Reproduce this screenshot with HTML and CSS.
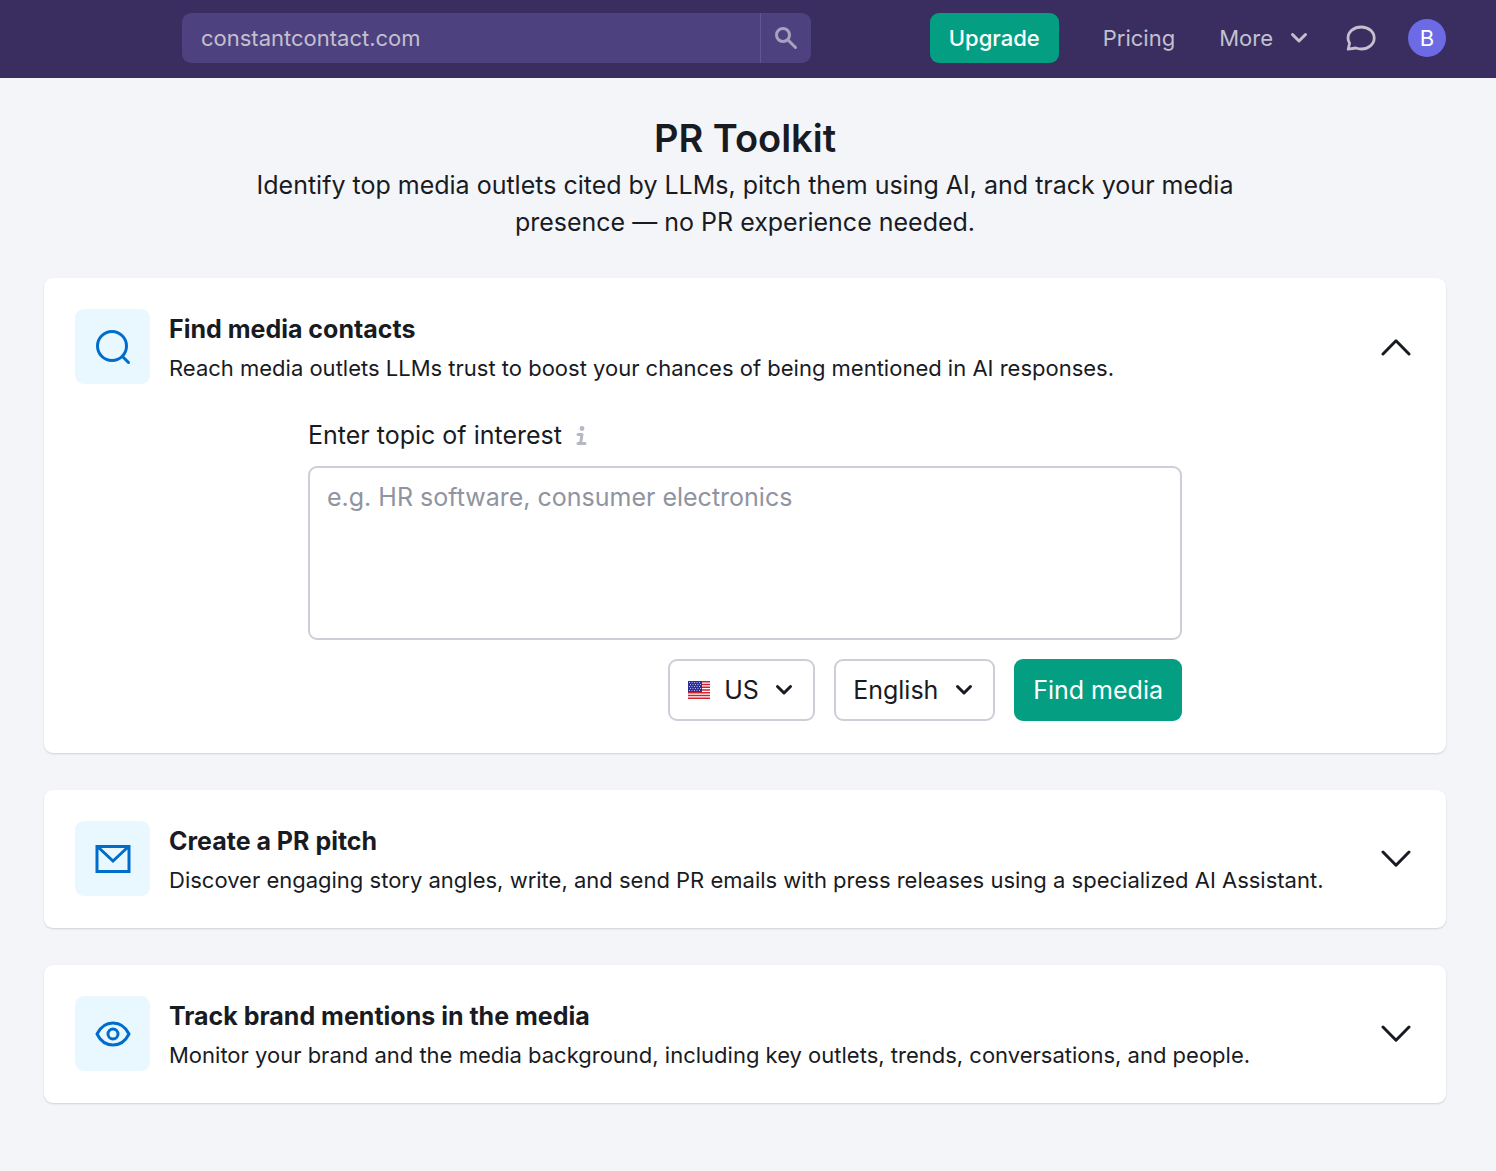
FILE: index.html
```html
<!DOCTYPE html>
<html lang="en">
<head>
    <meta charset="UTF-8">
    <meta name="viewport" content="width=device-width, initial-scale=1">
    <title>PR Toolkit</title>
    <link rel="stylesheet" href="styles.css">
</head>
<body>
    <header class="topbar">
        <form class="search" role="search">
            <input class="search-input" type="text" aria-label="Domain" value="constantcontact.com">
            <button class="search-btn" type="button" aria-label="Search">
                <svg width="24" height="24" viewBox="0 0 24 24" fill="none" stroke="currentColor" stroke-width="3" stroke-linecap="round">
                    <circle cx="9" cy="9" r="6.5"/>
                    <path d="M14 14l7.5 7.5"/>
                </svg>
            </button>
        </form>
        <nav class="nav">
            <a class="btn btn-small" href="#">Upgrade</a>
            <a class="nav-link" href="#">Pricing</a>
            <button class="nav-link nav-more" type="button">
                More
                <svg width="18" height="12" viewBox="0 0 18 12" fill="none" stroke="currentColor" stroke-width="3" stroke-linecap="round" stroke-linejoin="round">
                    <path d="M2.5 2.5L9 9l6.5-6.5"/>
                </svg>
            </button>
            <button class="nav-link nav-chat" type="button" aria-label="Messages">
                <svg width="30" height="26" viewBox="0 0 30 26" fill="none" stroke="currentColor" stroke-width="2.8" stroke-linejoin="round">
                    <path d="M2.2 24.2L3.6 18.2C2.5 16.6 2 14.8 2 13 2 6.8 7.9 2 15.2 2S28.2 6.8 28.2 13 22.400 24 15.200 24c-1.800 0-3.500-.3-5.200-1z"/>
                </svg>
            </button>
            <button class="avatar" type="button" aria-label="Account">B</button>
        </nav>
    </header>

    <main class="page">
        <div class="intro">
            <h1>PR Toolkit</h1>
            <p>Identify top media outlets cited by LLMs, pitch them using AI, and track your media presence — no PR experience needed.</p>
        </div>

        <details class="card" open>
            <summary class="card-head">
                <span class="card-icon">
                    <svg width="36" height="36" viewBox="0 0 36 36" fill="none" stroke="currentColor" stroke-width="3" stroke-linecap="round">
                        <circle cx="17" cy="17" r="14.5"/>
                        <path d="M27.500 27.500l6 6"/>
                    </svg>
                </span>
                <span class="card-text">
                    <h2>Find media contacts</h2>
                    <span class="card-desc">Reach media outlets LLMs trust to boost your chances of being mentioned in AI responses.</span>
                </span>
                <svg class="card-arrow" width="30" height="18" viewBox="0 0 30 18" fill="none" stroke="currentColor" stroke-width="3" stroke-linecap="round" stroke-linejoin="round">
                    <path d="M2 2l13 13.200L28 2"/>
                </svg>
            </summary>
            <form class="topic-form">
                <div class="topic-label">
                    <label for="topic">Enter topic of interest</label>
                    <svg width="11" height="20" viewBox="0 0 11 20" fill="none" stroke="currentColor" stroke-width="3" stroke-linecap="round" stroke-linejoin="round">
                        <circle cx="6" cy="2.500" r="2.400" fill="currentColor" stroke="none"/>
                        <path d="M2 8.500h4L4.500 17.500M2 17.500h7"/>
                    </svg>
                </div>
                <textarea id="topic" placeholder="e.g. HR software, consumer electronics"></textarea>
                <div class="actions">
                    <div class="select">
                        <svg class="flag" width="22" height="18" viewBox="0 0 22 18">
                            <path fill="#fff" d="M0 0h22v18H0z"/>
                            <path stroke="#d0202e" stroke-width="1.500" d="M0 .8h22M0 3.500h22M0 6.200h22M0 9h22M0 11.700h22M0 14.400h22M0 17.200h22"/>
                            <path fill="#2b2f9e" d="M0 0h14v11H0z"/>
                            <path stroke="#b9bbe6" stroke-width="1" stroke-dasharray="1 1.500" d="M1 1.500h12M2 3.500h11M1 5.500h12M2 7.500h11M1 9.500h12"/>
                        </svg>
                        <select class="country" aria-label="Country">
                            <option>US</option>
                        </select>
                        <svg class="arrow" width="18" height="12" viewBox="0 0 18 12" fill="none" stroke="currentColor" stroke-width="3" stroke-linecap="round" stroke-linejoin="round">
                            <path d="M2.500 2.500L9 9l6.500-6.500"/>
                        </svg>
                    </div>
                    <div class="select">
                        <select class="language" aria-label="Language">
                            <option>English</option>
                        </select>
                        <svg class="arrow" width="18" height="12" viewBox="0 0 18 12" fill="none" stroke="currentColor" stroke-width="3" stroke-linecap="round" stroke-linejoin="round">
                            <path d="M2.500 2.500L9 9l6.500-6.500"/>
                        </svg>
                    </div>
                    <button class="btn" type="button">Find media</button>
                </div>
            </form>
        </details>

        <details class="card">
            <summary class="card-head">
                <span class="card-icon">
                    <svg width="36" height="30" viewBox="0 0 36 30" fill="none" stroke="currentColor" stroke-width="3">
                        <path d="M2 2.500h32v25H2zM3 3l15 14L33 3"/>
                    </svg>
                </span>
                <span class="card-text">
                    <h2>Create a PR pitch</h2>
                    <span class="card-desc">Discover engaging story angles, write, and send PR emails with press releases using a specialized AI Assistant.</span>
                </span>
                <svg class="card-arrow" width="30" height="18" viewBox="0 0 30 18" fill="none" stroke="currentColor" stroke-width="3" stroke-linecap="round" stroke-linejoin="round">
                    <path d="M2 2l13 13.200L28 2"/>
                </svg>
            </summary>
        </details>

        <details class="card">
            <summary class="card-head">
                <span class="card-icon">
                    <svg width="36" height="26" viewBox="0 0 36 26" fill="none" stroke="currentColor" stroke-width="3" stroke-linejoin="round">
                        <path d="M2 13C5.500 6 11 2 18 2s12.500 4 16 11c-3.500 7-9 11-16 11S5.500 20 2 13z"/>
                        <circle cx="18" cy="13" r="5"/>
                    </svg>
                </span>
                <span class="card-text">
                    <h2>Track brand mentions in the media</h2>
                    <span class="card-desc">Monitor your brand and the media background, including key outlets, trends, conversations, and people.</span>
                </span>
                <svg class="card-arrow" width="30" height="18" viewBox="0 0 30 18" fill="none" stroke="currentColor" stroke-width="3" stroke-linecap="round" stroke-linejoin="round">
                    <path d="M2 2l13 13.200L28 2"/>
                </svg>
            </summary>
        </details>
    </main>
</body>
</html>
```

FILE: styles.css
```css
* {
    box-sizing: border-box;
}
body {
    margin: 0;
    min-height: 100vh;
    background-color: #f4f5f9;
    color: #191b23;
    font-family: Inter, sans-serif;
    font-size: 25px;
}
button, input, select, textarea {
    font: inherit;
    color: inherit;
}
button {
    border: none;
    padding: 0;
    background: none;
    cursor: pointer;
}
svg {
    display: block;
    flex: none;
}

/* top bar */
.topbar {
    display: flex;
    align-items: center;
    justify-content: space-between;
    gap: 40px;
    padding: 13px 50px 15px 182px;
    background-color: #392e5f;
    color: #c3c0cf;
    font-size: 22px;
}
.search {
    display: flex;
    flex: 0 1 629px;
    min-width: 0;
    height: 50px;
    border-radius: 9px;
    background-color: #4e417f;
}
.search-input {
    flex: 1;
    min-width: 0;
    padding: 0 19px;
    border: none;
    background: none;
}
.search-btn {
    display: flex;
    align-items: center;
    justify-content: center;
    width: 51px;
    border-left: 1px solid #62568e;
    color: #a8a1c0;
}
.nav {
    display: flex;
    align-items: center;
}
.nav-link {
    margin-left: 44px;
    color: inherit;
    text-decoration: none;
}
.nav-more {
    display: flex;
    align-items: center;
    gap: 17px;
}
.nav-chat {
    margin-left: 38px;
}
.avatar {
    width: 38px;
    height: 38px;
    margin-left: 32px;
    border-radius: 50%;
    background-color: #6c6be5;
    color: #fff;
}
.btn {
    display: flex;
    align-items: center;
    height: 62px;
    padding: 0 19px;
    border-radius: 9px;
    background-color: #049f82;
    color: #fff;
    text-decoration: none;
}
.btn-small {
    height: 50px;
    font-weight: 500;
}

/* page */
.page {
    display: flex;
    flex-direction: column;
    gap: 37px;
    padding: 36px 50px 68px 44px;
}
.intro {
    text-align: center;
}
h1 {
    margin: 0;
    font-size: 38px;
    line-height: 48px;
    font-weight: 600;
}
.intro p {
    max-width: 1000px;
    margin: 5px auto 0;
    line-height: 37px;
}

/* cards */
.card {
    padding: 31px 31px 32px;
    border-radius: 9px;
    background-color: #fff;
    box-shadow: 0 1px 2px rgba(25, 27, 35, 0.16);
}
.card-head {
    display: flex;
    align-items: center;
    gap: 19px;
    list-style: none;
    cursor: pointer;
}
.card-icon {
    display: flex;
    flex: none;
    align-items: center;
    justify-content: center;
    width: 75px;
    height: 75px;
    border-radius: 9px;
    background-color: #e9f7ff;
    color: #006dca;
}
.card-text {
    flex: 1;
    padding-top: 2px;
}
h2 {
    margin: 0 0 4px;
    font-size: 25px;
    line-height: 37px;
    font-weight: 700;
}
.card-desc {
    display: block;
    font-size: 22px;
    line-height: 32px;
}
.card-arrow {
    margin-right: 4px;
}
.card[open] .card-arrow {
    transform: rotate(180deg);
}

/* topic form */
.topic-form {
    max-width: 874px;
    margin: 33px auto 0;
}
.topic-label {
    display: flex;
    align-items: center;
    gap: 14px;
    margin-bottom: 12px;
    line-height: 37px;
}
.topic-label svg {
    color: #b5b8c4;
}
textarea {
    display: block;
    width: 100%;
    height: 174px;
    padding: 11px 17px;
    border: 2px solid #cdced8;
    border-radius: 9px;
    background-color: #fff;
    line-height: 37px;
    resize: none;
}
textarea::placeholder {
    color: #9094a1;
}
.actions {
    display: flex;
    justify-content: flex-end;
    gap: 19px;
    margin-top: 19px;
}
.select {
    position: relative;
}
select {
    height: 62px;
    border: 2px solid #cdced8;
    border-radius: 9px;
    background-color: #fff;
    appearance: none;
}
.country {
    padding: 0 54px;
}
.language {
    padding: 0 54px 0 17px;
}
.flag, .arrow {
    position: absolute;
    top: 50%;
    transform: translateY(-50%);
    pointer-events: none;
}
.flag {
    left: 20px;
}
.arrow {
    right: 22px;
}
```
